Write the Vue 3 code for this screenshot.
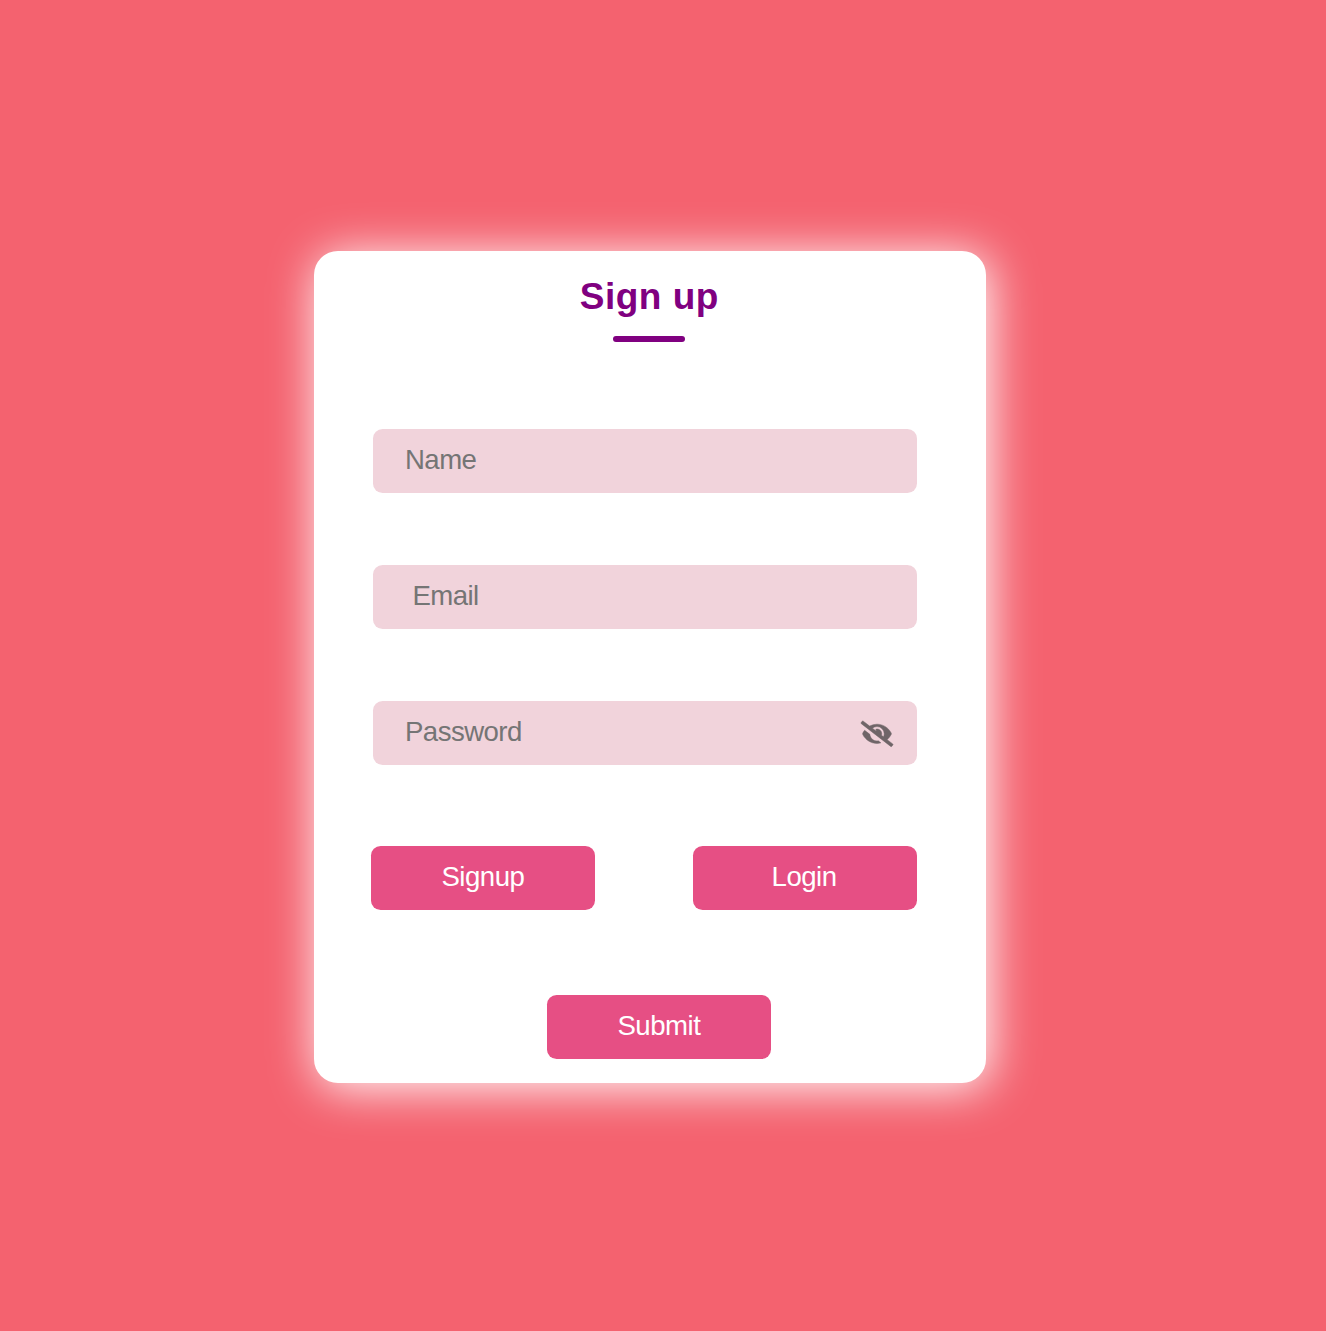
<script setup>
import { ref } from 'vue'

const name = ref('')
const email = ref('')
const password = ref('')
</script>

<template>
  <main class="page">
    <form class="card" @submit.prevent>
      <h1 class="title">Sign up</h1>
      <div class="rule"></div>
      <div class="fields">
        <input v-model="name" class="field" type="text" placeholder="Name" />
        <input v-model="email" class="field email" type="text" placeholder="Email" />
        <div class="password">
          <input v-model="password" class="field" type="password" placeholder="Password" />
          <svg class="eye" viewBox="0 0 640 512" aria-hidden="true">
            <path d="M320 400c-75.85 0-137.25-58.71-142.9-133.11L72.2 185.82c-13.79 17.3-26.48 35.59-36.72 55.59a32.35 32.35 0 0 0 0 29.19C89.71 376.41 197.07 448 320 448c26.91 0 52.87-4 77.89-10.46L346 397.39a144.13 144.13 0 0 1-26 2.61zm313.82 58.1l-110.55-85.44a331.25 331.25 0 0 0 81.25-102.07 32.35 32.35 0 0 0 0-29.19C550.29 135.59 442.93 64 320 64a308.15 308.15 0 0 0-147.32 37.7L45.46 3.37A16 16 0 0 0 23 6.18L3.37 31.45A16 16 0 0 0 6.18 53.9l588.36 454.73a16 16 0 0 0 22.46-2.81l19.64-25.27a16 16 0 0 0-2.82-22.45zm-183.72-142l-39.3-30.38A94.75 94.75 0 0 0 416 256a94.76 94.76 0 0 0-121.31-92.21A47.65 47.65 0 0 1 304 192a46.64 46.64 0 0 1-1.54 10l-73.69-56.96A142.31 142.31 0 0 1 320 112a143.92 143.92 0 0 1 144 144c0 21.63-5.29 41.79-13.9 60.1z" />
          </svg>
        </div>
      </div>
      <div class="choices">
        <button class="btn" type="button">Signup</button>
        <button class="btn" type="button">Login</button>
      </div>
      <button class="btn submit" type="submit">Submit</button>
    </form>
  </main>
</template>

<style>
body {
  margin: 0;
  background: #f4626f;
}
</style>

<style scoped>
.page {
  box-sizing: border-box;
  min-height: 1331px;
  padding: 251.2px 0 0 313.6px;
  background: #f4626f;
  font-family: "Liberation Sans", Arial, sans-serif;
}
.card {
  box-sizing: border-box;
  display: flex;
  flex-direction: column;
  width: 672px;
  height: 832px;
  padding: 24px 69px 24px 59.4px;
  border-radius: 24px;
  background: #fff;
  box-shadow: 3.2px 4.8px 48px #fff;
}
.title {
  align-self: center;
  margin: 0 0 0 9px;
  font-size: 37px;
  letter-spacing: 0.5px;
  line-height: 44px;
  color: purple;
}
.rule {
  align-self: center;
  width: 72px;
  height: 6.4px;
  margin: 16.8px 0 0 8px;
  border-radius: 3.2px;
  background: purple;
}
.fields {
  display: flex;
  flex-direction: column;
  gap: 72px;
  margin-top: 86.4px;
}
.field {
  box-sizing: border-box;
  display: block;
  width: 100%;
  height: 64px;
  margin: 0;
  padding: 0 32px 1px;
  border: 0;
  border-radius: 9.6px;
  outline: none;
  background: #f1d3db;
  font-family: inherit;
  font-size: 27.6px;
  letter-spacing: -0.55px;
}
.field::placeholder {
  color: #757575;
}
.email {
  padding-left: 39.4px;
}
.password {
  position: relative;
}
.eye {
  position: absolute;
  top: 20.4px;
  right: 24px;
  width: 32px;
  height: 25.6px;
  overflow: visible;
  fill: #6f6568;
  stroke: #6f6568;
  stroke-width: 10;
}
.choices {
  display: flex;
  justify-content: space-between;
  margin: 81.6px 0 0 -1.6px;
}
.btn {
  width: 224px;
  height: 64px;
  margin: 0;
  padding: 0 1px 2px 0;
  border: 0;
  border-radius: 9.6px;
  background: #e64f84;
  font-family: inherit;
  font-size: 27.6px;
  letter-spacing: -0.5px;
  color: #fff;
}
.submit {
  margin: 84.8px 0 0 174.4px;
}
</style>
